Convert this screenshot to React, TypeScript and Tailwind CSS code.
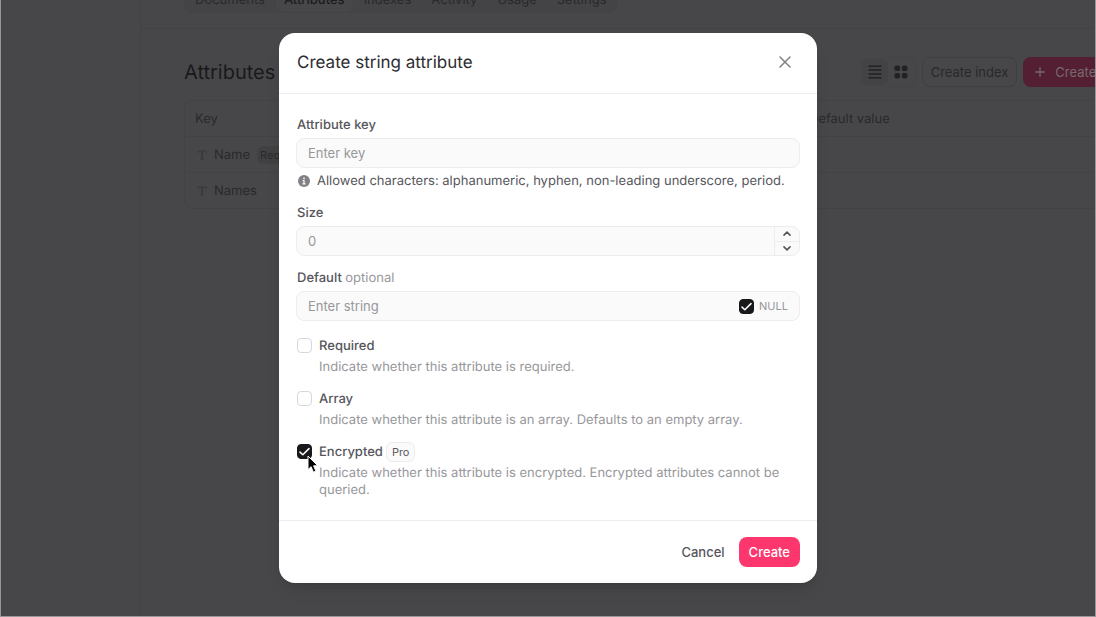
import { useState } from "react";
import type { ReactNode } from "react";

const tabs = ["Documents", "Attributes", "Indexes", "Activity", "Usage", "Settings"];

function Checkbox({ id, defaultChecked = false }: { id: string; defaultChecked?: boolean }) {
  const [checked, setChecked] = useState(defaultChecked);
  return (
    <span className="grid size-[15px] shrink-0 place-items-center">
      <input
        id={id}
        type="checkbox"
        checked={checked}
        onChange={(e) => setChecked(e.target.checked)}
        className="peer col-start-1 row-start-1 size-[15px] appearance-none rounded-[4px] border border-[#d8d8db] bg-white checked:border-[#19191c] checked:bg-[#19191c]"
      />
      <svg
        viewBox="0 0 15 15"
        className="pointer-events-none invisible col-start-1 row-start-1 size-[15px] peer-checked:visible"
        fill="none"
        stroke="white"
        strokeWidth="1.5"
        strokeLinecap="round"
        strokeLinejoin="round"
        aria-hidden="true"
      >
        <path d="M3 8.1 5.8 10.8l6.2-6.2" />
      </svg>
    </span>
  );
}

function Option({
  id,
  label,
  badge,
  checked,
  children,
}: {
  id: string;
  label: string;
  badge?: ReactNode;
  checked?: boolean;
  children: ReactNode;
}) {
  return (
    <div className="flex gap-[7px]">
      <div className="flex h-5 items-center pb-[2px]">
        <Checkbox id={id} defaultChecked={checked} />
      </div>
      <div className="flex flex-col gap-[3px]">
        <div className="flex h-5 items-center gap-[3px]">
          <label htmlFor={id} className="font-medium text-[#56565c]">
            {label}
          </label>
          {badge}
        </div>
        <p className="leading-[17px] text-[#97979b]">{children}</p>
      </div>
    </div>
  );
}

function TypeIcon() {
  return (
    <svg viewBox="0 0 10 10" className="size-[10px]" fill="none" stroke="#39393b" strokeWidth="1" aria-hidden="true">
      <path d="M.9 3.2V1h8.2v2.2M3 9.1h4" />
      <path d="M5 1v8" strokeWidth="1.8" />
    </svg>
  );
}

function Page() {
  return (
    <div className="flex h-full bg-[#474749] text-[13px] leading-5 text-[#29292b]">
      <aside className="w-[140px] shrink-0 border-r border-[#434345]" />
      <main className="min-w-0 flex-1 overflow-hidden">
        <header className="flex h-[29px] items-end overflow-hidden border-b border-[#434345] pb-[15px] pl-[43px]">
          <nav className="flex h-[26px] items-center rounded-lg bg-[#444446] pl-px">
            {tabs.map((tab) => (
              <a
                key={tab}
                href={"#" + tab.toLowerCase()}
                className={
                  tab === "Attributes"
                    ? "flex h-[26px] items-center rounded-lg border border-[#434345] bg-[#474749] px-2 font-medium text-[#1c1c1e]"
                    : "flex h-[26px] items-center px-[10px]"
                }
              >
                {tab}
              </a>
            ))}
          </nav>
        </header>
        <section className="w-[1022px] pl-[43px] pt-7">
          <div className="flex items-center justify-between">
            <h1 className="text-[20px] leading-[30px] text-[#19191b]">Attributes</h1>
            <div className="flex items-center gap-[6px]">
              <div className="flex h-[30px] items-center rounded-lg border border-[#444446] px-px">
                <button type="button" aria-label="List view" className="grid size-[26px] place-items-center rounded-md bg-[#434345]">
                  <svg viewBox="0 0 14 14" className="size-[14px]" stroke="#222224" strokeWidth="1.5" aria-hidden="true">
                    <path d="M.5 1.2h13M.5 5.1h13M.5 9h13M.5 12.8h13" />
                  </svg>
                </button>
                <button type="button" aria-label="Grid view" className="grid size-[26px] place-items-center">
                  <svg viewBox="0 0 14 14" className="size-[14px]" fill="#222224" aria-hidden="true">
                    <rect x=".5" y=".5" width="5.6" height="5.6" rx="1.8" />
                    <rect x="7.9" y=".5" width="5.6" height="5.6" rx="1.8" />
                    <rect x=".5" y="7.9" width="5.6" height="5.6" rx="1.8" />
                    <rect x="7.9" y="7.9" width="5.6" height="5.6" rx="1.8" />
                  </svg>
                </button>
              </div>
              <button type="button" className="h-[30px] rounded-lg border border-[#3f3f41] px-2">
                Create index
              </button>
              <button type="button" className="flex h-[30px] items-center gap-[10px] rounded-lg bg-[#541f32] px-3 text-[#77696e]">
                <svg viewBox="0 0 10 10" className="size-[10px]" stroke="currentColor" strokeWidth="1.3" strokeLinecap="round" aria-hidden="true">
                  <path d="M5 .7v8.6M.7 5h8.6" />
                </svg>
                Create attribute
              </button>
            </div>
          </div>
          <div className="mt-[13px] overflow-hidden rounded-lg border border-[#434345]">
            <table className="w-full table-fixed text-left">
              <thead>
                <tr className="h-[35px]">
                  <th className="w-[614px] pl-[10px] pt-[2px] font-normal">Key</th>
                  <th className="pl-[10px] pt-[2px] font-normal">Default value</th>
                </tr>
              </thead>
              <tbody>
                <tr className="h-9 border-t border-[#434345]">
                  <td className="pl-3 pt-[2px]">
                    <div className="flex items-center gap-[7px]">
                      <TypeIcon />
                      Name
                      <span className="rounded-md bg-[#414143] px-[3px] text-[11px] leading-[18px]">Required</span>
                    </div>
                  </td>
                  <td />
                </tr>
                <tr className="h-9 border-t border-[#434345]">
                  <td className="pl-3 pt-[2px]">
                    <div className="flex items-center gap-[7px]">
                      <TypeIcon />
                      Names
                    </div>
                  </td>
                  <td />
                </tr>
              </tbody>
            </table>
          </div>
        </section>
      </main>
    </div>
  );
}

const inputClass =
  "h-full min-w-0 flex-1 bg-transparent px-[11px] text-[#56565c] outline-none placeholder:text-[#97979b]";
const fieldClass = "flex h-[30px] items-center overflow-hidden rounded-lg border border-[#ededf0] bg-[#fafafa]";
const labelClass = "pl-px font-medium";

function Dialog() {
  const [size, setSize] = useState("");
  const step = (delta: number) => setSize(String(Math.max(0, Number(size) + delta)));
  return (
    <div
      role="dialog"
      aria-modal="true"
      aria-labelledby="dialog-title"
      className="w-[538px] max-w-full rounded-2xl bg-white text-[13px] leading-5 text-[#56565c] shadow-lg"
    >
      <div className="flex h-[61px] items-center justify-between border-b border-[#ededf0] px-[18px]">
        <h2 id="dialog-title" className="text-[17px] leading-6 text-[#2d2d31]">
          Create string attribute
        </h2>
        <button type="button" aria-label="Close" className="grid size-7 place-items-center pb-[2px]">
          <svg viewBox="0 0 12 12" className="size-3" stroke="#818186" strokeWidth="1.5" strokeLinecap="round" aria-hidden="true">
            <path d="m1 1 10 10M11 1 1 11" />
          </svg>
        </button>
      </div>

      <form className="flex flex-col gap-3 px-[17px] py-[21px]" onSubmit={(e) => e.preventDefault()}>
        <div className="flex flex-col gap-[3px]">
          <label htmlFor="key" className={labelClass}>
            Attribute key
          </label>
          <div className={fieldClass}>
            <input id="key" type="text" placeholder="Enter key" className={inputClass} />
          </div>
          <p className="flex items-center gap-[7px] pl-[2px]">
            <svg viewBox="0 0 12 12" className="size-3 shrink-0" aria-hidden="true">
              <circle cx="6" cy="6" r="6" fill="#818186" />
              <circle cx="6" cy="3.3" r="0.9" fill="white" />
              <path d="M4.7 5.5H6v3.2M4.5 8.8h3" stroke="white" strokeWidth="1.2" fill="none" />
            </svg>
            Allowed characters: alphanumeric, hyphen, non-leading underscore, period.
          </p>
        </div>

        <div className="flex flex-col gap-[3px]">
          <label htmlFor="size" className={labelClass}>
            Size
          </label>
          <div className={fieldClass}>
            <input
              id="size"
              type="text"
              inputMode="numeric"
              placeholder="0"
              value={size}
              onChange={(e) => setSize(e.target.value.replace(/\D/g, ""))}
              className={inputClass}
            />
            <div className="flex h-full w-[25px] flex-col divide-y divide-[#ededf0] border-l border-[#ededf0]">
              <button type="button" aria-label="Increase size" onClick={() => step(1)} className="grid flex-1 place-items-center">
                <svg viewBox="0 0 8 5" className="h-[5px] w-2" fill="none" stroke="#56565c" strokeWidth="1.6" strokeLinecap="round" strokeLinejoin="round">
                  <path d="M1 4.1 4 1.1l3 3" />
                </svg>
              </button>
              <button type="button" aria-label="Decrease size" onClick={() => step(-1)} className="grid flex-1 place-items-center">
                <svg viewBox="0 0 8 5" className="h-[5px] w-2" fill="none" stroke="#56565c" strokeWidth="1.6" strokeLinecap="round" strokeLinejoin="round">
                  <path d="m1 .9 3 3 3-3" />
                </svg>
              </button>
            </div>
          </div>
        </div>

        <div className="flex flex-col gap-[3px]">
          <label htmlFor="default" className={labelClass}>
            Default <span className="font-normal text-[#97979b]">optional</span>
          </label>
          <div className={fieldClass}>
            <input id="default" type="text" placeholder="Enter string" className={inputClass} />
            <div className="flex items-center gap-[5px] pr-[11px]">
              <Checkbox id="null" defaultChecked />
              <label htmlFor="null" className="text-[11px] text-[#97979b]">
                NULL
              </label>
            </div>
          </div>
        </div>

        <div className="flex flex-col gap-[13px] pl-px pt-[3px]">
          <Option id="required" label="Required">
            Indicate whether this attribute is required.
          </Option>
          <Option id="array" label="Array">
            Indicate whether this attribute is an array. Defaults to an empty array.
          </Option>
          <div className="relative">
            <Option
              id="encrypted"
              label="Encrypted"
              checked
              badge={
                <span className="rounded-md border border-[#ededf0] bg-[#fafafa] px-[5px] text-[11px] leading-[18px]">
                  Pro
                </span>
              }
            >
              Indicate whether this attribute is encrypted. Encrypted attributes cannot be queried.
            </Option>
            <svg viewBox="0 0 12 19" className="pointer-events-none absolute left-[10px] top-[13px] h-[19px] w-3" aria-hidden="true">
              <path d="M1 1v13.6l3.1-2.9 2.3 5.5 2.5-1.1-2.3-5.3h4.2z" fill="black" stroke="white" strokeWidth="1" strokeLinejoin="round" />
            </svg>
          </div>
        </div>
      </form>

      <div className="flex items-center justify-end gap-[5px] border-t border-[#ededf0] px-[17px] py-4">
        <button type="button" className="h-[30px] rounded-lg px-[9px] font-medium">
          Cancel
        </button>
        <button type="button" className="h-[30px] rounded-lg bg-[#fd366e] px-[10px] font-medium text-white">
          Create
        </button>
      </div>
    </div>
  );
}

export default function App() {
  return (
    <div className="h-screen bg-[#98989a] p-px pt-0 font-['Inter',sans-serif] antialiased [text-rendering:geometricPrecision]">
      <div className="grid h-full overflow-hidden">
        <div className="col-start-1 row-start-1 min-h-0 min-w-0 overflow-hidden">
          <Page />
        </div>
        <div className="z-10 col-start-1 row-start-1 flex min-w-0 items-center justify-center">
          <Dialog />
        </div>
      </div>
    </div>
  );
}
